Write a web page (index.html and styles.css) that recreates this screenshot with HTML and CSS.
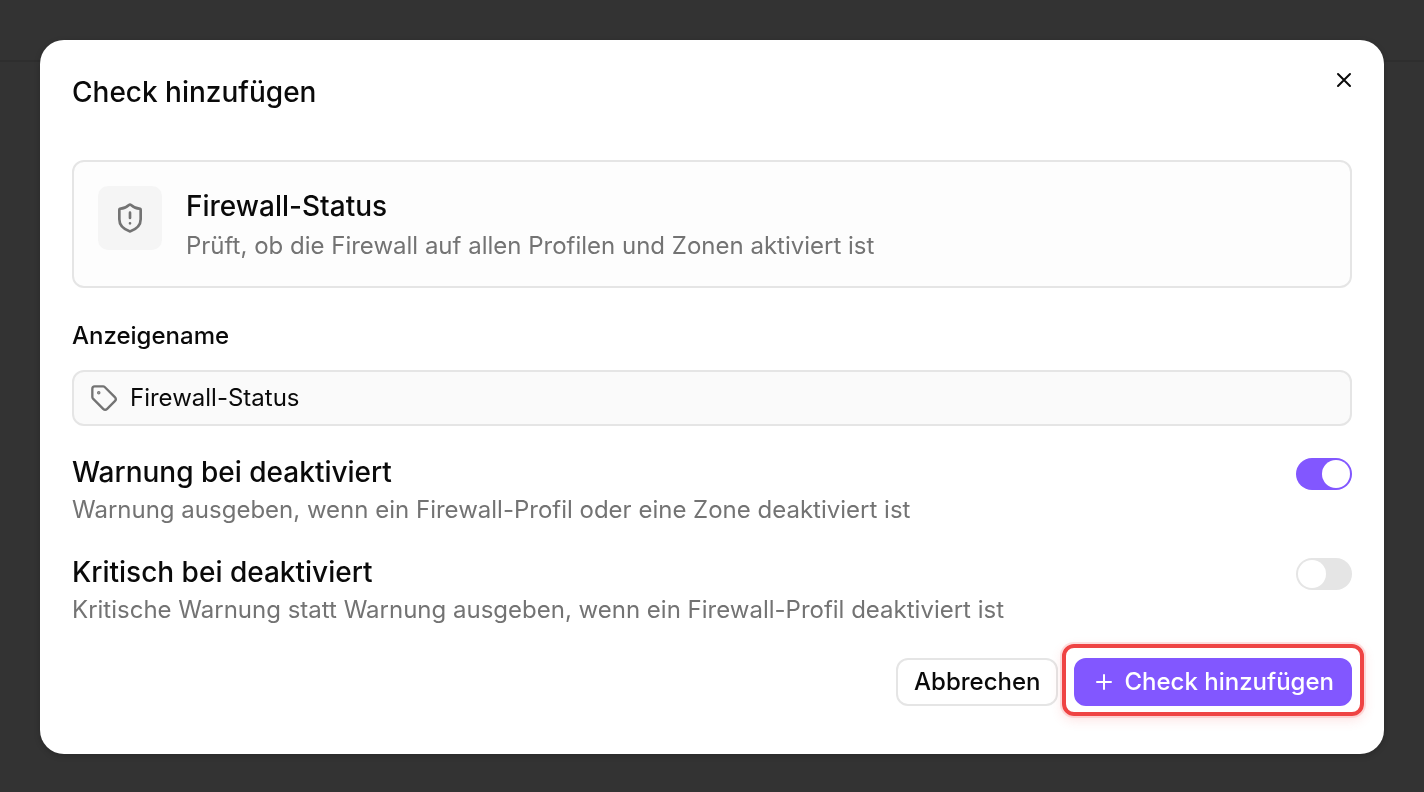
FILE: index.html
```html
<!DOCTYPE html>
<html lang="de">
<head>
    <meta charset="UTF-8">
    <title>Check hinzufügen</title>
    <meta name="viewport" content="width=device-width, initial-scale=1.0">
    <link rel="stylesheet" href="styles.css">
</head>
<body>
    <div class="page-bar"></div>

    <div class="overlay">
        <form class="dialog" role="dialog" aria-modal="true" aria-labelledby="dialog-title">
            <header class="dialog-header">
                <h1 class="title" id="dialog-title">Check hinzufügen</h1>
                <button type="button" class="close" aria-label="Schließen">
                    <svg class="icon" width="24" height="24" viewBox="0 0 24 24"><path d="M18 6 6 18M6 6l12 12"/></svg>
                </button>
            </header>

            <section class="card">
                <div class="card-icon">
                    <svg class="icon" width="32" height="32" viewBox="0 0 24 24">
                        <path d="M20 13c0 5-3.5 7.5-7.66 8.95a1 1 0 0 1-.67-.01C7.5 20.5 4 18 4 13V6a1 1 0 0 1 1-1c2 0 4.5-1.2 6.24-2.72a1.17 1.17 0 0 1 1.52 0C14.51 3.81 17 5 19 5a1 1 0 0 1 1 1z"/>
                        <path d="M12 8v4M12 16h.01"/>
                    </svg>
                </div>
                <div class="card-text">
                    <h2 class="title">Firewall-Status</h2>
                    <p class="hint">Prüft, ob die Firewall auf allen Profilen und Zonen aktiviert ist</p>
                </div>
            </section>

            <div class="field">
                <label for="name">Anzeigename</label>
                <div class="input-group">
                    <svg class="icon" width="28" height="28" viewBox="0 0 24 24">
                        <path d="M12.586 2.586A2 2 0 0 0 11.172 2H4a2 2 0 0 0-2 2v7.172a2 2 0 0 0 .586 1.414l8.704 8.704a2.426 2.426 0 0 0 3.42 0l6.58-6.58a2.426 2.426 0 0 0 0-3.42z"/>
                        <circle cx="7.5" cy="7.5" r=".5" fill="currentColor"/>
                    </svg>
                    <input type="text" id="name" value="Firewall-Status">
                </div>
            </div>

            <div class="option">
                <div class="option-text">
                    <label class="title" for="warn">Warnung bei deaktiviert</label>
                    <p class="hint" id="warn-hint">Warnung ausgeben, wenn ein Firewall-Profil oder eine Zone deaktiviert ist</p>
                </div>
                <input type="checkbox" role="switch" class="switch" id="warn" aria-describedby="warn-hint" checked>
            </div>

            <div class="option">
                <div class="option-text">
                    <label class="title" for="critical">Kritisch bei deaktiviert</label>
                    <p class="hint" id="critical-hint">Kritische Warnung statt Warnung ausgeben, wenn ein Firewall-Profil deaktiviert ist</p>
                </div>
                <input type="checkbox" role="switch" class="switch" id="critical" aria-describedby="critical-hint">
            </div>

            <footer class="actions">
                <button type="button" class="btn">Abbrechen</button>
                <button type="submit" class="btn btn-primary">
                    <svg class="icon" width="24" height="24" viewBox="0 0 24 24"><path d="M5 12h14M12 5v14"/></svg>
                    Check hinzufügen
                </button>
            </footer>
        </form>
    </div>
</body>
</html>
```
FILE: styles.css
```css
* {
    box-sizing: border-box;
}

body {
    background-color: #333;
    color: #0a0a0a;
    font-family: Inter, sans-serif;
    font-size: 24px;
    line-height: 32px;
    margin: 0;
}

h1, h2, p {
    margin: 0;
}

button, input {
    font: inherit;
    color: inherit;
}

.icon {
    display: block;
    flex: none;
    fill: none;
    stroke: currentColor;
    stroke-width: 2;
    stroke-linecap: round;
    stroke-linejoin: round;
}

.page-bar {
    height: 62px;
    border-bottom: 2px solid #2e2e2e;
}

.overlay {
    position: fixed;
    inset: 0;
    display: flex;
    align-items: center;
    padding: 42px 40px 40px;
}

.dialog {
    flex: 1;
    display: flex;
    flex-direction: column;
    padding: 32px 32px 48px;
    background-color: #fff;
    border-radius: 24px;
    box-shadow: 0 2px 6px rgba(0, 0, 0, 0.2);
}

.dialog-header {
    display: flex;
    justify-content: space-between;
    align-items: flex-start;
    height: 88px;
}

.title {
    display: block;
    font-size: 28px;
    font-weight: 500;
    line-height: 40px;
}

.close {
    margin: -4px -4px 0 0;
    padding: 0;
    border: none;
    background: none;
    cursor: pointer;
}

.hint {
    color: #737373;
}

.card {
    display: flex;
    gap: 24px;
    padding: 24px;
    background-color: #fdfdfd;
    border: 2px solid #e5e5e5;
    border-radius: 12px;
}

.card-icon {
    display: flex;
    align-items: center;
    justify-content: center;
    width: 64px;
    height: 64px;
    flex: none;
    color: #737373;
    background-color: #f5f5f5;
    border-radius: 10px;
}

.card-text {
    display: flex;
    flex-direction: column;
    gap: 4px;
}

.field {
    display: flex;
    flex-direction: column;
    gap: 18px;
    margin-top: 32px;
}

.field label {
    font-weight: 500;
}

.input-group {
    display: flex;
    align-items: center;
    gap: 12px;
    height: 56px;
    padding: 0 16px;
    background-color: #fafafa;
    border: 2px solid #e5e5e5;
    border-radius: 12px;
}

.input-group .icon {
    color: #737373;
}

.input-group input {
    flex: 1;
    min-width: 0;
    padding: 0;
    border: none;
    outline: none;
    background: none;
}

.option {
    display: flex;
    justify-content: space-between;
    align-items: flex-start;
    margin-top: 26px;
}

.option-text {
    display: flex;
    flex-direction: column;
    gap: 2px;
}

.switch {
    appearance: none;
    flex: none;
    width: 56px;
    height: 32px;
    margin: 6px 0 0;
    padding: 2px;
    background-color: #e5e5e5;
    border-radius: 16px;
    cursor: pointer;
}

.switch::before {
    content: "";
    display: block;
    width: 28px;
    height: 28px;
    background-color: #fff;
    border-radius: 50%;
}

.switch:checked {
    background-color: #8257ff;
}

.switch:checked::before {
    margin-left: auto;
}

.actions {
    display: flex;
    justify-content: flex-end;
    gap: 16px;
    margin-top: 32px;
}

.btn {
    display: flex;
    align-items: center;
    gap: 8px;
    height: 48px;
    padding: 0 16px;
    font-weight: 500;
    background-color: #fff;
    border: 2px solid #e5e5e5;
    border-radius: 12px;
    cursor: pointer;
}

.btn-primary {
    position: relative;
    color: #fff;
    background-color: #8257ff;
    border-color: #8257ff;
}

/* red ring around the main action */
.btn-primary::after {
    content: "";
    position: absolute;
    inset: -16px -14px -12px;
    border: 4px solid #ef4444;
    border-radius: 12px;
    box-shadow: 0 0 0 2px rgba(239, 68, 68, 0.15), 0 4px 12px rgba(239, 68, 68, 0.15);
    pointer-events: none;
}
```
